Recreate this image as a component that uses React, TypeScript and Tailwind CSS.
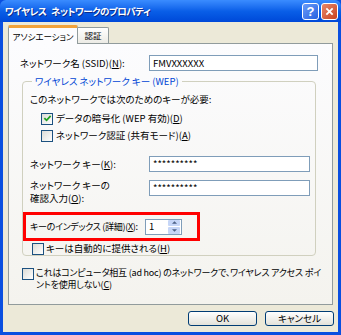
import React from 'react';

const jp = "font-['Noto_Sans_CJK_JP',sans-serif] [font-feature-settings:'palt']";

function Check({ checked }: { checked?: boolean }) {
  return (
    <span className="w-[12px] h-[12px] border border-[#1C5180] bg-linear-to-br from-[#DCDCD7] to-white flex items-center justify-center shrink-0">
      {checked && (
        <svg viewBox="0 0 10 10" className="w-[9px] h-[9px]">
          <path d="M1.5 4.5 L4 7 L8.5 2.2" stroke="#21A121" strokeWidth="2" fill="none" />
        </svg>
      )}
    </span>
  );
}

function Field({ value, w }: { value: string; w: string }) {
  return (
    <div className={`${w} h-[16px] border border-[#7F9DB9] bg-white flex items-center px-[3px] text-[9.5px] text-black`}>
      {value}
    </div>
  );
}

function XpButton({ label }: { label: string }) {
  return (
    <button className="w-[69px] h-[15px] rounded-[3px] border border-[#003C74] bg-linear-to-b from-white to-[#E3E2DA] text-[9.5px] flex items-center justify-center leading-none">
      {label}
    </button>
  );
}

export default function App() {
  return (
    <div className={`w-[341px] h-[335px] flex flex-col bg-[#0A4FE0] ${jp} text-[9.5px] text-black whitespace-nowrap`}>
      {/* Title bar */}
      <div className="h-[22px] shrink-0 flex items-center pl-[5px] pr-[3px] bg-linear-to-b from-[#3A8CFF] via-[#0A5FE8] to-[#0048D8] rounded-t-[6px]">
        <span className="text-white font-bold text-[9.5px] tracking-[-0.5px] [word-spacing:3px] [text-shadow:1px_1px_0_#0A2A8A]">
          ワイヤレス ネットワークのプロパティ
        </span>
        <div className="ml-auto flex gap-[2px]">
          <div className="w-[17px] h-[17px] rounded-[3px] border border-white bg-linear-to-br from-[#6A9CF8] to-[#2660E0] flex items-center justify-center text-white font-bold text-[13px] font-['Liberation_Sans',sans-serif] leading-none">
            ?
          </div>
          <div className="w-[17px] h-[17px] rounded-[3px] border border-white bg-linear-to-br from-[#E8876A] to-[#C8401A] flex items-center justify-center">
            <svg viewBox="0 0 10 10" className="w-[9px] h-[9px]">
              <path d="M1.5 1.5 L8.5 8.5 M8.5 1.5 L1.5 8.5" stroke="white" strokeWidth="2" />
            </svg>
          </div>
        </div>
      </div>

      {/* Body */}
      <div className="flex-1 mx-[3px] mb-[3px] bg-[#ECE9D8] px-[5px] pt-[3px] flex flex-col">
        {/* Tabs */}
        <div className="flex items-end h-[19px] relative z-10 -mb-px">
          <div className="w-[70px] h-[19px] bg-[#FCFCFE] border-x border-[#919B9C] border-t-[3px] border-t-[#F2A23A] rounded-t-[2px] flex items-center justify-center text-[8.5px]">
            アソシエーション
          </div>
          <div className="w-[31px] h-[16px] bg-linear-to-b from-white to-[#ECEBE5] border-r border-t border-[#919B9C] rounded-tr-[2px] flex items-center justify-center text-[8.5px] mb-px">
            認証
          </div>
        </div>

        {/* Panel */}
        <div className="h-[262px] w-[325px] border border-[#919B9C] bg-linear-to-b from-[#FCFCFE] to-[#F4F3EE] pl-[11px] pt-[11px] flex flex-col">
          <div className="flex items-center h-[16px]">
            <span className="w-[129px]">ネットワーク名 (SSID)(<span className="underline">N</span>):</span>
            <Field value="FMVXXXXXX" w="w-[169px]" />
          </div>

          {/* Group */}
          <fieldset className="ml-[2px] mt-[3px] w-[294px] h-[182px] border border-[#D0D0BF] rounded-[4px] pl-[7px] pr-0 pb-0 pt-0">
            <legend className="text-[#0046D5] px-[3px] ml-[2px] leading-[14px]">
              ワイヤレス ネットワーク キー (WEP)
            </legend>
            <div className="mt-[4px] h-[14px] flex items-center">このネットワークでは次のためのキーが必要:</div>
            <div className="mt-[6px] ml-[11px] flex items-center gap-[3px] h-[13px]">
              <Check checked />
              <span>データの暗号化 (WEP 有効)(<span className="underline">D</span>)</span>
            </div>
            <div className="mt-[4px] ml-[11px] flex items-center gap-[3px] h-[13px]">
              <Check />
              <span>ネットワーク認証 (共有モード)(<span className="underline">A</span>)</span>
            </div>
            <div className="mt-[14px] flex items-center h-[16px]">
              <span className="w-[119px]">ネットワーク キー(<span className="underline">K</span>):</span>
              <Field value="**********" w="w-[161px]" />
            </div>
            <div className="mt-[8px] flex items-start">
              <div className="w-[119px] flex flex-col -mt-[1px]">
                <span className="h-[13px] leading-[13px]">ネットワーク キーの</span>
                <span className="h-[13px] leading-[13px]">確認入力(<span className="underline">O</span>):</span>
              </div>
              <Field value="**********" w="w-[161px]" />
            </div>
            <div className="mt-[7px] -ml-[7px] w-[177px] h-[29px] border-[3px] border-[#FF0000] pl-[4px] flex items-center">
              <span className="w-[115px] text-[9px] tracking-[-0.3px]">キーのインデックス (詳細)(<span className="underline">X</span>):</span>
              <div className="w-[37px] h-[16px] border border-[#7F9DB9] bg-white flex items-center">
                <span className="flex-1 pl-[3px]">1</span>
                <div className="w-[12px] h-[14px] flex flex-col gap-px mr-px">
                  <div className="flex-1 rounded-[1px] bg-[#C6D6F7] flex items-center justify-center">
                    <svg viewBox="0 0 6 3" className="w-[5px] h-[3px]"><path d="M0 3 L3 0 L6 3 Z" fill="#4D6185" /></svg>
                  </div>
                  <div className="flex-1 rounded-[1px] bg-[#C6D6F7] flex items-center justify-center">
                    <svg viewBox="0 0 6 3" className="w-[5px] h-[3px]"><path d="M0 0 L3 3 L6 0 Z" fill="#4D6185" /></svg>
                  </div>
                </div>
              </div>
            </div>
            <div className="mt-[1px] ml-[2px] flex items-center gap-[2px] h-[13px]">
              <Check />
              <span>キーは自動的に提供される(<span className="underline">H</span>)</span>
            </div>
          </fieldset>

          <div className="mt-[11px] ml-[2px] flex items-start gap-[2px]">
            <div className="mt-[1px]"><Check /></div>
            <div className="flex flex-col text-[9px] tracking-[-0.2px]">
              <span className="h-[12px] leading-[12px]">これはコンピュータ相互 (ad hoc) のネットワークで、ワイヤレス アクセス ポイ</span>
              <span className="h-[12px] leading-[12px]">ントを使用しない(<span className="underline">C</span>)</span>
            </div>
          </div>
        </div>

        {/* Buttons */}
        <div className="mt-[6px] flex justify-end gap-[8px] -mr-[1px]">
          <XpButton label="OK" />
          <XpButton label="キャンセル" />
        </div>
      </div>
    </div>
  );
}
